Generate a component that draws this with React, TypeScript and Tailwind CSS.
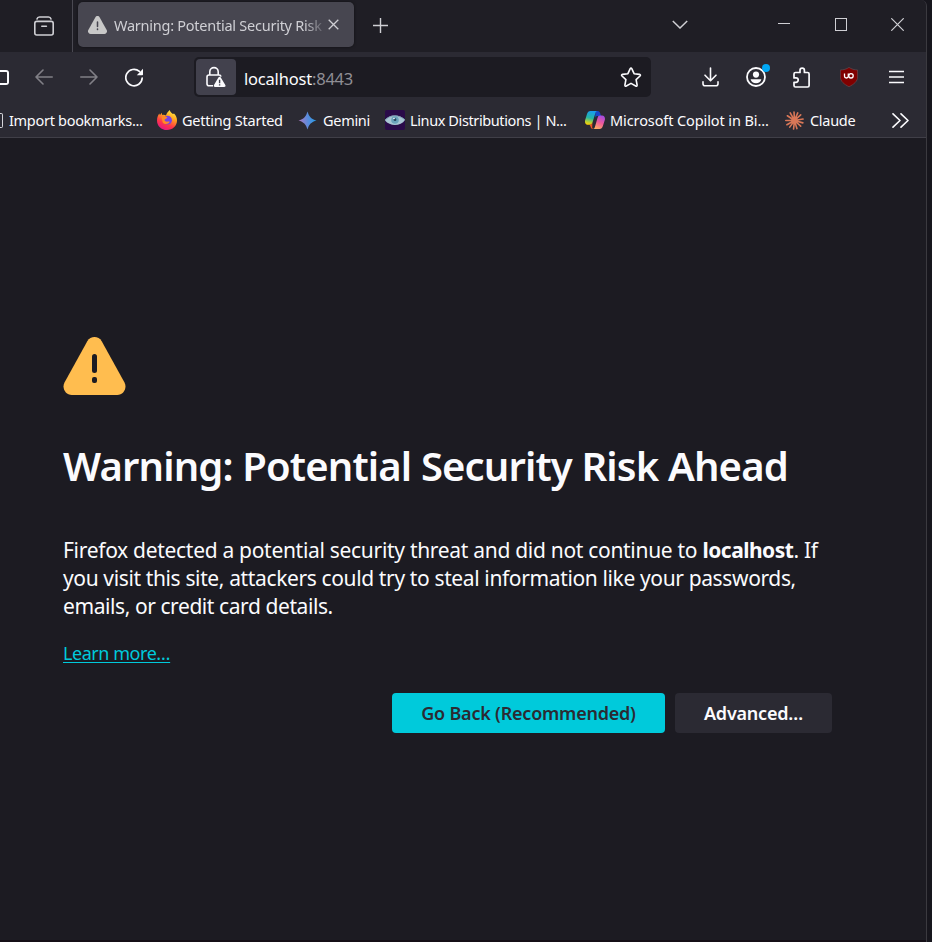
import type { ReactNode } from "react";

function WarningTriangle({ className, mark }: { className: string; mark: string }) {
  return (
    <svg className={className} viewBox="0 0 62 58" fill="none">
      <path
        d="M23.800 4.200C27-1.400 35-1.400 38.200 4.200L61 45.600C63.900 51 60 58 53.700 58H8.300C2 58-1.900 51 1 45.600Z"
        fill="currentColor"
      />
      <rect x="28.500" y="17" width="5" height="19" rx="2.500" fill={mark} />
      <rect x="28.500" y="40" width="5" height="6" rx="2" fill={mark} />
    </svg>
  );
}

function TabBar() {
  return (
    <div className="flex h-[52px] items-start bg-[#1f1e25] text-[#cfcfd4]">
      <div className="flex h-full w-[73px] items-center border-r border-[#4a4952] pl-[33px]">
        <svg className="h-5 w-[22px]" viewBox="0 0 22 20" fill="none" stroke="currentColor" strokeWidth="1.6" strokeLinecap="round">
          <path d="M4 3C4.400 1.500 5.200 1 6.500 1h9c1.300 0 2.100.5 2.500 2" />
          <rect x="1.800" y="5.400" width="18.400" height="13.600" rx="2" />
          <path d="M8.800 10.300h4.600" />
        </svg>
      </div>
      <div className="ml-[5px] mt-[2px] flex h-[45px] w-[276px] items-center rounded-[5px] bg-[#474650] pl-[10px] shadow-[0_0_3px_rgba(0,0,0,0.5)]">
        <WarningTriangle className="h-[18px] w-[19px] shrink-0 text-[#c8c8c8]" mark="#474650" />
        <span className="ml-[7px] mt-[2px] w-[209px] shrink-0 whitespace-nowrap text-[14.5px] tracking-[-0.25px] [mask-image:linear-gradient(to_right,black_190px,transparent_213px)]">
          Warning: Potential Security Risk
        </span>
        <svg className="ml-[5px] h-[11px] w-[11px] shrink-0" viewBox="0 0 11 11" stroke="currentColor" strokeWidth="1.3">
          <path d="M.7.7l9.6 9.6M10.3.7L.7 10.3" />
        </svg>
      </div>
      <svg className="ml-[19px] mt-[18px] h-[15px] w-[15px]" viewBox="0 0 15 15" stroke="currentColor" strokeWidth="1.4">
        <path d="M7.500 0v15M0 7.500h15" />
      </svg>
      <svg className="ml-[284px] mt-[20px] h-[9px] w-4" viewBox="0 0 16 9" fill="none" stroke="currentColor" strokeWidth="1.5">
        <path d="M.8 1L8 8l7.200-7" />
      </svg>
      <div className="ml-[90px] mt-[23px] h-px w-3 bg-[#cfcfd4]" />
      <div className="ml-[45px] mt-[18px] h-[13px] w-3 border border-[#cfcfd4]" />
      <svg className="ml-11 mt-[18px] h-[13px] w-[13px]" viewBox="0 0 13 13" stroke="currentColor" strokeWidth="1.2">
        <path d="M.3.3l12.400 12.400M12.700.3L.3 12.700" />
      </svg>
    </div>
  );
}

function Toolbar() {
  return (
    <div className="flex h-[51px] items-center pb-px text-[#fbfbfe]">
      <div className="h-[15px] w-[9px] rounded-r-[3px] border-y-2 border-r-2 border-[#fbfbfe]" />
      <svg className="ml-[26px] h-4 w-[18px] text-[#818087]" viewBox="0 0 18 16" fill="none" stroke="currentColor" strokeWidth="1.6" strokeLinecap="round" strokeLinejoin="round">
        <path d="M17.200 8H1M8 1L1 8l7 7" />
      </svg>
      <svg className="ml-[27px] h-4 w-[18px] text-[#818087]" viewBox="0 0 18 16" fill="none" stroke="currentColor" strokeWidth="1.6" strokeLinecap="round" strokeLinejoin="round">
        <path d="M.8 8H17M10 1l7 7-7 7" />
      </svg>
      <svg className="ml-[27px] h-[19px] w-[19px]" viewBox="0 0 19 19" fill="none">
        <path d="M17.200 10A8.200 8.200 0 1 1 14.400 3.400" stroke="currentColor" strokeWidth="1.7" strokeLinecap="round" />
        <path d="M18 .8v5.600c0 .5-.3.8-.8.8h-5.400z" fill="currentColor" />
      </svg>
      <div className="ml-[50px] flex h-10 w-[457px] items-center rounded-[5px] bg-[#1c1b22] pl-[2px]">
        <div className="flex h-9 w-10 items-center justify-center rounded-[4px] bg-[#42414d]">
          <svg className="h-[22px] w-5" viewBox="0 0 20 22" fill="none">
            <path d="M3.800 9V5.800a4.200 4.200 0 0 1 8.400 0V9" stroke="currentColor" strokeWidth="1.6" />
            <path d="M7 19.800H3a2 2 0 0 1-2-2V11a2 2 0 0 1 2-2h10a2 2 0 0 1 2 1.600" stroke="currentColor" strokeWidth="1.6" />
            <path d="M12.400 11.600c.6-1.100 1.800-1.100 2.400 0l4.500 7.400c.6 1.100 0 2-1.200 2H9.200c-1.200 0-1.800-.9-1.200-2z" fill="currentColor" />
            <path d="M13.600 13.800v3.400M13.600 18.200v1.300" stroke="#42414d" strokeWidth="1.4" />
          </svg>
        </div>
        <span className="ml-[8px] mt-[5px] whitespace-nowrap text-[16.5px] tracking-[-0.2px]">
          localhost<span className="text-[#8f8e95]">:8443</span>
        </span>
        <svg className="ml-auto mr-[9px] h-[21px] w-[22px]" viewBox="0 0 22 21" fill="none" stroke="currentColor" strokeWidth="1.6" strokeLinejoin="round">
          <path d="M10.100 1.800q.9-1.600 1.800 0l2.200 4.900 5.300.7q1.700.4.6 1.600l-3.900 3.700 1 5.300q.1 1.700-1.400 1L11 16.400 6.300 19q-1.500.7-1.400-1l1-5.300L2 9Q.9 7.800 2.600 7.400l5.300-.7z" />
        </svg>
      </div>
      <svg className="ml-[51px] h-5 w-[17px]" viewBox="0 0 17 20" fill="none" stroke="currentColor" strokeWidth="1.6" strokeLinecap="round" strokeLinejoin="round">
        <path d="M8.500 1v12.500M3 8.200l5.500 5.500L14 8.200M1 14.800v2a2 2 0 0 0 2 2h11a2 2 0 0 0 2-2v-2" />
      </svg>
      <div className="relative ml-[27px] h-5 w-5">
        <svg className="h-5 w-5" viewBox="0 0 20 20" fill="none">
          <circle cx="10" cy="10" r="9" stroke="currentColor" strokeWidth="1.8" />
          <circle cx="10" cy="7.600" r="3.100" fill="currentColor" />
          <path d="M4.600 12.200h10.800c-.6 2.500-2.700 4-5.400 4s-4.800-1.500-5.400-4z" fill="currentColor" />
        </svg>
        <div className="absolute -right-[4px] -top-[3px] h-2 w-2 rounded-full bg-[#00a8f5]" />
      </div>
      <svg className="ml-[27px] h-[21px] w-[17px]" viewBox="0 0 17 21" fill="none" stroke="currentColor" strokeWidth="1.700" strokeLinejoin="round">
        <path d="M1 9V7a1.500 1.500 0 0 1 1.500-1.500H7V3.300a2.200 2.200 0 0 1 4.400 0v2.200h3.200A1.500 1.500 0 0 1 16.100 7v11.500a1.500 1.500 0 0 1-1.500 1.500H2.500A1.500 1.500 0 0 1 1 18.500V15.300h2a2.200 2.200 0 0 0 0-4.400H1z" />
      </svg>
      <svg className="ml-[30px] h-5 w-[18px]" viewBox="0 0 18 20">
        <path d="M9 .4c2.500 1.700 5.300 2.500 8.600 2.600v7c0 4.200-3.600 7.300-8.600 9.700C4 17.300.4 14.200.4 10V3C3.700 2.900 6.500 2.100 9 .4z" fill="#800000" stroke="#6b5055" strokeWidth=".6" />
        <path d="M4.500 6.500v2.800q0 1.700 1.900 1.700t1.900-1.700V6.500" fill="none" stroke="white" strokeWidth="1.300" />
        <circle cx="11" cy="8.800" r="2.200" fill="none" stroke="white" strokeWidth="1.300" />
      </svg>
      <svg className="ml-[31px] h-[14px] w-[15px]" viewBox="0 0 15 14" stroke="currentColor" strokeWidth="1.600">
        <path d="M0 1.500h15M0 7h15M0 12.500h15" />
      </svg>
    </div>
  );
}

function Bookmark({ className, icon, children }: { className: string; icon: ReactNode; children: ReactNode }) {
  return (
    <div className={`flex shrink-0 items-center whitespace-nowrap ${className}`}>
      {icon}
      <span className="mt-[2px]">{children}</span>
    </div>
  );
}

function FirefoxIcon() {
  return (
    <svg className="mr-[5px] h-5 w-5" viewBox="0 0 20 20">
      <defs>
        <linearGradient id="fx" x1=".8" y1="0" x2=".3" y2="1">
          <stop offset="0" stopColor="#fff44f" />
          <stop offset=".35" stopColor="#ffa61e" />
          <stop offset=".7" stopColor="#ff3647" />
          <stop offset="1" stopColor="#e31587" />
        </linearGradient>
      </defs>
      <path d="M10 20C4.200 20 0 15.800 0 10.400 0 7.500 1 5.200 2.400 3.600L2.900 5.200 4.600 2.800 5.200 5C6.500 4.600 8 4.800 9 5.600 9.500 3.500 11 1.500 12.800 0 13 2 14.500 2.900 16 4l1-.4C19 5.600 20 8 20 10.500 20 16 15.500 20 10 20z" fill="url(#fx)" />
      <circle cx="10.500" cy="10.200" r="4.400" fill="#7542e5" />
      <path d="M4.500 6.500c2-1 4.500-.5 6 1.200L8.500 9c-1.400.4-1 2.200.5 2.600 1.400.4 2.500-.6 3.700.2-1.200 2.600-5 3-7 .7z" fill="#ff8a25" />
    </svg>
  );
}

function GeminiIcon() {
  return (
    <svg className="mr-[6px] h-[19px] w-[19px]" viewBox="0 0 20 20">
      <defs>
        <linearGradient id="gem" x1="0" y1=".5" x2="1" y2=".4">
          <stop offset="0" stopColor="#b17ac0" />
          <stop offset=".5" stopColor="#5c8bdc" />
          <stop offset="1" stopColor="#219ce6" />
        </linearGradient>
      </defs>
      <path d="M10 .5C11.600 6 14 8.400 19.500 10 14 11.600 11.600 14 10 19.500 8.400 14 6 11.600.5 10 6 8.400 8.400 6 10 .5z" fill="url(#gem)" />
    </svg>
  );
}

function EyeIcon() {
  return (
    <svg className="mr-[5px] h-5 w-5" viewBox="0 0 20 20">
      <rect width="20" height="20" rx="2" fill="#2a0b49" />
      <path d="M0 10.500C4 4.200 14 3.500 20 10 16 16.200 5 16.800 0 10.500z" fill="#a9c6d4" />
      <path d="M0 10C5 4.500 14 4.500 20 9.800" fill="none" stroke="#7d9fb2" />
      <circle cx="10" cy="10" r="3.800" fill="#6ba3bb" />
      <circle cx="10" cy="9.700" r="1.400" fill="#24475e" />
      <circle cx="9" cy="8.500" r=".8" fill="white" />
    </svg>
  );
}

function CopilotIcon() {
  return (
    <svg className="mr-[5px] h-5 w-5" viewBox="0 0 20 20">
      <defs>
        <linearGradient id="cpl" x1=".5" y1="0" x2=".3" y2="1">
          <stop offset="0" stopColor="#199cf0" />
          <stop offset=".5" stopColor="#25b5a4" />
          <stop offset=".8" stopColor="#b4cf36" />
          <stop offset="1" stopColor="#ffd000" />
        </linearGradient>
        <linearGradient id="cpr" x1=".7" y1="0" x2=".3" y2="1">
          <stop offset="0" stopColor="#a34be0" />
          <stop offset=".5" stopColor="#ef5a9a" />
          <stop offset="1" stopColor="#ffad62" />
        </linearGradient>
      </defs>
      <path d="M10.500 1h2.200c1.500 0 2.100 1 2.500 2.300L16 6h-3.500c-1.500 0-2 .8-2.400 2z" fill="#1746c9" />
      <path d="M5.500 1h6.800c-1 0-1.500.8-1.900 2L7.500 12.500c-.5 1.600-1.400 2.300-2.900 2.300H3.200C.5 14.800-.5 12.500.2 10L2 4C2.700 1.900 3.600 1 5.500 1z" fill="url(#cpl)" />
      <path d="M4.600 14.800c1.500 0 2.300-.8 2.800-2.300l-.2 5c.4 1 .9 1.500 2 1.500H8c-1.500 0-2-.8-2.400-2.200z" fill="#ef5423" />
      <path d="M15 5.500h2c2.500 0 3.400 2.200 2.800 4.500l-1.900 6c-.7 2-1.600 3-3.500 3H8c1 0 1.500-.8 1.900-2l2.600-9C13 6.300 13.500 5.500 15 5.500z" fill="url(#cpr)" />
    </svg>
  );
}

function ClaudeIcon() {
  return (
    <svg className="mr-[6px] h-[19px] w-[19px]" viewBox="0 0 20 20" stroke="#d97757" strokeWidth="1.700" strokeLinecap="round">
      <path d="M10 10L9.500 1M10 10l3.400-8M10 10l6.500-6M10 10l9-1.500M10 10l8.800 2.500M10 10l6.500 6M10 10l2.500 8.500M10 10L9 19M10 10l-5 7M10 10l-8 4.500M10 10H.8M10 10L2.500 5M10 10L5.500 2" />
      <circle cx="10" cy="10" r="2.400" fill="#d97757" />
    </svg>
  );
}

function BookmarksBar() {
  return (
    <div className="flex h-[34px] items-center text-[14.5px] tracking-[-0.3px] text-[#fbfbfe]">
      <div className="mr-[6px] h-[15px] w-[3px] shrink-0 rounded-r-[2px] border-y border-r border-[#d5d5da]" />
      <Bookmark className="w-[148px]" icon={null}>Import bookmarks...</Bookmark>
      <Bookmark className="w-[141px] tracking-[-0.23px]" icon={<FirefoxIcon />}>Getting Started</Bookmark>
      <Bookmark className="w-[87px]" icon={<GeminiIcon />}>Gemini</Bookmark>
      <Bookmark className="w-[200px] tracking-[-0.39px]" icon={<EyeIcon />}>Linux Distributions | N...</Bookmark>
      <Bookmark className="w-[200px] tracking-[-0.1px]" icon={<CopilotIcon />}>Microsoft Copilot in Bi...</Bookmark>
      <Bookmark className="w-[107px]" icon={<ClaudeIcon />}>Claude</Bookmark>
      <svg className="h-[15px] w-[17px] shrink-0" viewBox="0 0 17 15" fill="none" stroke="currentColor" strokeWidth="1.600" strokeLinecap="round" strokeLinejoin="round">
        <path d="M1 .8l7 6.700-7 6.700M9 .8l7 6.700-7 6.700" />
      </svg>
    </div>
  );
}

function WarningPage() {
  return (
    <main className="flex-1 bg-[#1c1b22] pl-[63px] pt-[199px] text-[#fbfbfe]">
      <WarningTriangle className="h-[58px] w-[63px] text-[#ffbd4f]" mark="#1c1b22" />
      <h1 className="mt-[43px] whitespace-nowrap text-[40px] font-semibold leading-[56px] tracking-[-0.85px]">
        Warning: Potential Security Risk Ahead
      </h1>
      <p className="mt-[42px] whitespace-nowrap text-[21px] leading-[28px]">
        <span className="block tracking-[-0.3px]">
          Firefox detected a potential security threat and did not continue to{" "}
          <b className="tracking-[-0.5px]">localhost</b>. If
        </span>
        <span className="block tracking-[-0.37px]">you visit this site, attackers could try to steal information like your passwords,</span>
        <span className="block tracking-[-0.42px]">emails, or credit card details.</span>
      </p>
      <a className="mt-[20px] block w-fit text-[18px] leading-[26px] tracking-[-0.45px] text-[#00cadb] underline decoration-1 underline-offset-2">
        Learn more…
      </a>
      <div className="mt-[27px] flex w-[769px] justify-end gap-[10px] text-[18px] font-semibold tracking-[-0.22px]">
        <button className="h-10 w-[273px] rounded-[4px] bg-[#00cadb] text-[#2b2a33]">Go Back (Recommended)</button>
        <button className="h-10 w-[157px] rounded-[4px] bg-[#2b2a33]">Advanced…</button>
      </div>
    </main>
  );
}

export default function App() {
  return (
    <div className="flex h-[942px] w-[932px] overflow-hidden bg-[#17161d] font-['Noto_Sans','Open_Sans',sans-serif]">
      <div className="flex w-[927px] shrink-0 flex-col overflow-hidden rounded-tr-[6px] border-r border-[#3b3a40] bg-[#2b2a33]">
        <TabBar />
        <Toolbar />
        <BookmarksBar />
        <div className="h-px bg-[#403f48]" />
        <WarningPage />
        <div className="h-[2px] bg-[#150f17]" />
      </div>
    </div>
  );
}
